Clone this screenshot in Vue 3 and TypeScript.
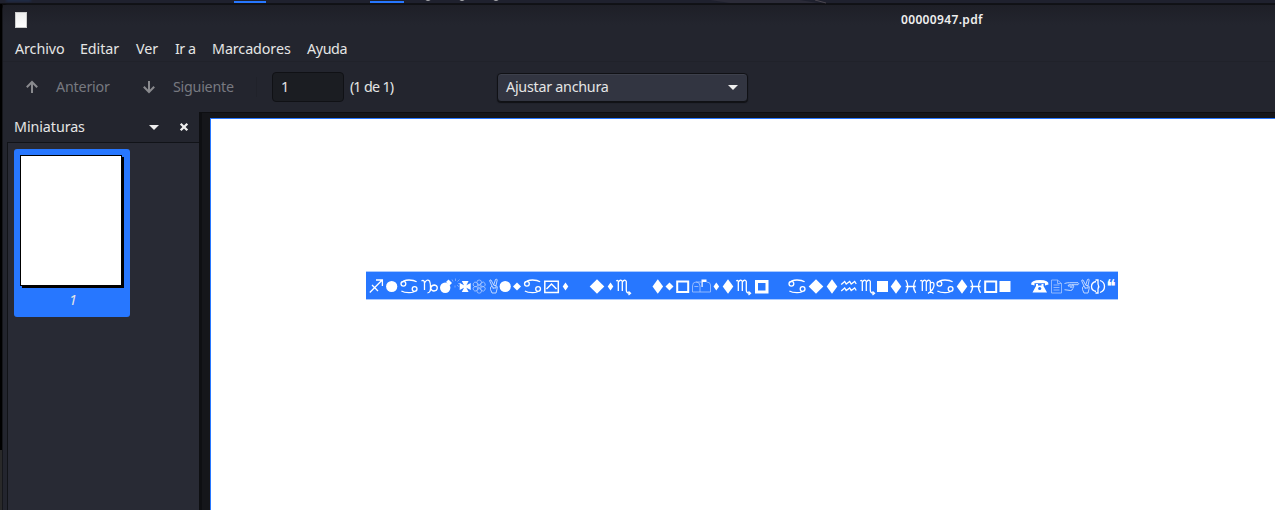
<script setup lang="ts">
const menus: string[] = ['Archivo', 'Editar', 'Ver', 'Ir a', 'Marcadores', 'Ayuda']
const menuWidths: number[] = [65, 56, 39, 37, 95, 60]

const shapes: Record<string, string> = {
  cancer: 'M1 11.5Q3 8 9 8Q14 8 16.6 9.8M5.8 11.8a2.4 2.4 0 1 1-4.8 0a2.4 2.4 0 1 1 4.8 0M17 17.2Q15 20.7 9 20.7Q4 20.7 1.4 19M17 17a2.4 2.4 0 1 1-4.8 0a2.4 2.4 0 1 1 4.8 0',
  sagittarius: 'M.8 20.5L13.2 8M7 8h6.4v6M3 13l6 6',
  capricorn: 'M.5 9Q3 7 3.5 11V18M3.5 11Q6 6.5 8.5 9Q9.5 11 9.5 15Q10 20.5 6.5 20.8M9.6 16Q10.5 13 13.5 13Q16.3 13.5 16.3 16Q16 19 13 19Q10.5 19 9.6 16',
  scorpio: 'M.3 9Q2 7.5 2.3 10V19M2.3 10Q5 6.5 6.3 9.5V19M6.3 10Q9 6.5 10.3 9.5V18Q10.3 21.3 14 21.3M12.5 19.6l2 1.7l-2 1.7',
  virgo: 'M.3 9Q2 7.5 2.3 10V19M2.3 10Q5 6.5 6.3 9.5V19M6.3 10Q9 6.5 10.3 9.5V17Q10.5 20 13.5 21.5M10.3 11Q14 9 14 13Q14 17.5 8 21.5',
  aquarius: 'M.5 12.5L4 9.5l1.5 2.5L9 9.5l1.5 2.5L14 9.5l1.5 2.5M.5 19L4 16l1.5 2.5L9 16l1.5 2.5L14 16l1.5 2.5',
  pisces: 'M1 8Q5.2 14.5 1 21M11 8Q6.8 14.5 11 21M1 14.5H11',
}
const signs: { n: string; x: number }[] = [
  { n: 'sagittarius', x: 369 }, { n: 'cancer', x: 400 }, { n: 'capricorn', x: 421 },
  { n: 'cancer', x: 523.5 }, { n: 'scorpio', x: 616 }, { n: 'scorpio', x: 736 },
  { n: 'cancer', x: 788 }, { n: 'aquarius', x: 840.7 }, { n: 'scorpio', x: 860 },
  { n: 'pisces', x: 904.7 }, { n: 'virgo', x: 920 }, { n: 'cancer', x: 936 }, { n: 'pisces', x: 969.5 },
]
const hands: number[] = [488.5, 1080.5]
const petals: number[] = [0, 60, 120, 180, 240, 300]
const arms: number[] = [0, 90, 180, 270]
const dots: number[] = [391.7, 505.2]
// centre x, half width, half height
const diamonds: number[][] = [
  [517, 4, 4], [565.5, 2.8, 4], [597, 7.3, 7.3], [610.5, 2.8, 4], [657.8, 5.3, 7.3],
  [669.5, 4, 4], [716.3, 2.8, 4], [728, 5.3, 7.3], [816, 7.3, 7.3], [832, 5.3, 7.3],
  [896, 5.3, 7.3], [962, 5.3, 7.3],
]
const diamond = (d: number[]): string => `M${d[0] - d[1]} 14.5L${d[0]} ${14.5 - d[2]}L${d[0] + d[1]} 14.5L${d[0]} ${14.5 + d[2]}Z`
</script>

<template>
  <div class="desktop">
    <div class="panel">
      <i class="glow"></i><i class="task t1"></i><i class="task t2"></i>
      <svg class="under" width="500" height="4" viewBox="0 0 500 4">
        <path d="M25 -1q3 2.200 6 0M59 -1q3 2.200 6 0M93 -1q3 2.200 6 0" fill="none" stroke="#ddd" stroke-width="1.200" />
        <path d="M310 0h90l18 3h-88z" fill="#2b2b38" /><path d="M415 0l11 3" stroke="#4b4650" />
      </svg>
    </div>
    <div class="body">
      <div class="edge"></div>
      <main class="window">
        <header class="title"><i class="doc"></i><b>00000947.pdf</b></header>
        <nav class="menu"><span v-for="(m, i) in menus" :key="m" :style="{ width: menuWidths[i] + 'px' }">{{ m }}</span></nav>
        <div class="tools">
          <svg class="arrow" width="14" height="14" viewBox="0 0 14 14"><path d="M7 13V2M1.8 7.2L7 2l5.2 5.2" /></svg>
          <span class="prev">Anterior</span>
          <svg class="arrow" width="14" height="14" viewBox="0 0 14 14"><path d="M7 1v11M1.8 6.8L7 12l5.2-5.2" /></svg>
          <span class="next">Siguiente</span>
          <span class="page">1</span><span class="count">(1 de 1)</span>
          <div class="select"><span>Ajustar anchura</span><svg width="10" height="5" viewBox="0 0 10 5"><path d="M0 0h10L5 5z" fill="#eee" /></svg></div>
        </div>
        <div class="content">
          <aside>
            <div class="side-head"><span>Miniaturas</span>
              <svg class="caret" width="10" height="5" viewBox="0 0 10 5"><path d="M0 0h10L5 5z" fill="#eee" /></svg>
              <svg width="10" height="10" viewBox="0 0 10 10"><path d="M1.7 1.7l6.6 6.6M8.3 1.7L1.7 8.3" stroke="#eee" stroke-width="2.3" /></svg>
            </div>
            <div class="thumbs"><div class="thumb"><div class="paper"></div><em>1</em></div></div>
          </aside>
          <section class="view"><div class="sheet">
            <div class="selection">
              <svg width="752" height="28" viewBox="366 0 752 28">
                <path v-for="(g, i) in signs" :key="i" :d="shapes[g.n]" :transform="`translate(${g.x} 0)`" class="sign" />
                <circle v-for="d in dots" :key="d" :cx="d" cy="14.5" r="5.6" />
                <path v-for="d in diamonds" :key="d[0]" :d="diamond(d)" />
                <circle cx="445.2" cy="15.7" r="5.2" /><path d="M446 10l2.5-2.5l3.5 3.5l-2.5 2.5z" />
                <path d="M453 9.500l-1-2M455.500 9V6.500M457.500 9.500l2-2M458 11.500h2.500M457 13l2 1.800M455 13.500v2" class="thin faint" />
                <path v-for="a in arms" :key="a" d="M461.800 9h6.800l-2.200 4.300v1.200h-2.400v-1.200z" :transform="`rotate(${a} 465.200 14.500)`" />
                <circle v-for="p in petals" :key="p" cx="479.2" cy="10.300" r="2.300" :transform="`rotate(${p} 479.2 14.600)`" class="thin" />
                <circle cx="479.2" cy="14.600" r="1.300" class="thin" />
                <path v-for="h in hands" :key="h" :transform="`translate(${h} 0)`" class="thin hand" d="M3.500 14L1.200 9Q1 7.500 2.500 8L5.200 13L7 7.500Q8.500 6.500 8.700 8L7.500 13.500Q9.500 14.500 8.500 17L7.500 21H3.500L2 17.500Q1.500 14.500 3.500 14zM3.500 14L5 16.500M5.200 13.500h2.300v2.500H4" />
                <path d="M544.8 9.200h13.500v11.300h-13.500zM546.500 17l5-5 5 5" class="line" />
                <path d="M677.2 9.500h11v10.500h-11z" class="box" />
                <path d="M756.500 9.500h10.500v10.500h-10.500z" class="thick" />
                <path d="M877 9h11v11h-11zM999.500 9h11v11h-11z" />
                <path d="M985.2 9.500h11v10.500h-11z" class="box" />
                <path d="M692.500 20v-6q0-4 3.500-4h5.500M692.500 20h7.500v-6q0-4-4-4M700 20h10.500v-7q0-3-4-3M694.300 14.500h4" class="thin" />
                <path d="M701.500 7.500h5v2.500h-3.800v5h-1.200z" />
                <path d="M1031 12.500q0-4.500 9-4.500t8.500 4.500l-3.500 1v-2.200h-10.500v2.200zM1036 12h2v1.500h3.500v-1.500h2v2l3.500 6.500h-14.500l3.500-6.500z" />
                <circle cx="1039.700" cy="16.500" r="1.600" fill="#2777ff" />
                <path d="M1051.500 8h6l4 3.500v9.500h-10zM1057.500 8v3.500h4M1053.500 13h6M1053.500 15.500h6M1053.500 18h6" class="thin" />
                <path d="M1064.500 11.500q3-1 5-.800h8.500q1.500 1 0 2h-6.500l2 .800q1 1-.500 1.700q1 1-.500 1.600q0 1.700-2 1.700l-6-.800M1071 12.700q-3-.500-3 1.300h4.500M1070 15.200h2.500" class="thin hand" />
                <path d="M1096 9.500q-4.500 1-4.500 5t4.500 5M1100 8.500q4.500 1.500 4.500 6t-4.500 6M1095.500 8h2.500v4q1.500 2.500 0 5v4h-2.500" class="sign" />
                <text x="1106.300" y="20.500" font-size="19" textLength="9.500" lengthAdjust="spacingAndGlyphs">❝</text>
              </svg>
            </div>
          </div></section>
        </div>
      </main>
    </div>
  </div>
</template>

<style>
body { margin: 0; background: #0b0b0d; }
</style>
<style scoped>
.desktop { width: 1275px; height: 510px; overflow: hidden; display: flex; flex-direction: column; font: 14.3px/20px "Noto Sans", sans-serif; color: #e5e5e5; white-space: nowrap; }
.panel { height: 3px; flex: none; background: #1f212e; position: relative; border-bottom: 1px solid #111217; }
.glow { position: absolute; left: 6px; width: 25px; height: 1px; background: #203b6c; filter: blur(1px); }
.task { position: absolute; top: 1px; width: 32px; height: 2px; background: #2777ff; }
.t1 { left: 234px; } .t2 { left: 370px; width: 34px; }
.under { position: absolute; left: 400px; top: 0; }
.body { display: flex; flex: 1; min-height: 0; }
.edge { width: 2px; background: linear-gradient(#000 446px, #292929 446px); }
.window { flex: 1; min-width: 0; display: flex; flex-direction: column; background: #23252e; border-left: 1px solid #15161b; border-top: 1px solid #101115; border-radius: 6px 0 0 0; }
.title { height: 31px; display: flex; background: linear-gradient(#1e1f27, #23252e 20px); }
.doc { width: 10px; height: 14px; margin: 7px 0 0 12px; border: 1px solid #ccc; background: linear-gradient(#eee, #fff); }
.title b { margin: 5px 0 0 874px; font-size: 12px; line-height: 20px; font-weight: 600; color: #eee; letter-spacing: .34px; }
.menu { height: 25px; padding-left: 12px; display: flex; line-height: 25px; border-bottom: 1px solid #20222a; letter-spacing: -.08px; }
.menu span:nth-child(4) { letter-spacing: -.5px; }
.menu span:nth-child(6) { letter-spacing: -.4px; }
.tools { height: 50px; display: flex; align-items: center; padding-left: 22px; box-sizing: border-box; }
.arrow { fill: none; stroke: #898a8e; stroke-width: 2; }
.prev { width: 70px; margin-left: 17px; color: #777980; margin-right: 16px; letter-spacing: -.2px; }
.next { width: 83px; margin-left: 17px; color: #777980; border-right: 1px solid #20222a; letter-spacing: -.25px; }
.page { width: 62px; height: 28px; line-height: 28px; margin-left: 15px; padding-left: 8px; background: #1b1d22; border: 1px solid #101115; border-radius: 4px; }
.count { width: 147px; margin-left: 6px; letter-spacing: -.95px; word-spacing: .7px; }
.select { width: 232px; height: 27px; padding: 0 9px 0 8px; box-sizing: content-box; margin-right: 0; border: 1px solid #101115; border-radius: 4px; background: #323541; display: flex; justify-content: space-between; align-items: center; box-shadow: 0 1px 1px #101115, inset 0 1px #3d404b; letter-spacing: -.25px; }
.content { flex: 1; min-height: 0; display: flex; }
aside { width: 196px; display: flex; flex-direction: column; }
.side-head { height: 30px; padding-left: 11px; display: flex; align-items: center; letter-spacing: -.08px; }
.side-head span { width: 135px; }
.caret { margin-right: 20px; }
.thumbs { flex: 1; margin-left: 4px; border: solid #111318; border-width: 1px 0 0 1px; background: #282a34; }
.thumb { width: 116px; height: 168px; margin: 6px 0 0 6px; border-radius: 3px; background: #2777ff; display: flex; flex-direction: column; align-items: center; }
.paper { width: 100px; height: 129px; margin: 6px 2px 0 0; background: #fff; border: 1px solid #000; box-shadow: 2px 2px #000; }
em { margin: 4px 0 0 2px; }
.view { flex: 1; border: solid #0e0f12; border-width: 1px 0 0 3px; background: #15161a; padding: 5px 0 0 8px; }
.sheet { height: 400px; border: solid #2777ff; border-width: 1px 0 0 1px; background: #fff; }
.selection { margin: 153px 0 0 155px; width: 752px; height: 27px; background: #2777ff; box-shadow: 0 0 0 1px #a9c9ff; clip-path: inset(-1px 0); }
.selection svg { display: block; fill: #fff; font-family: "DejaVu Sans", sans-serif; }
.selection svg .sign { fill: none; stroke: #fff; stroke-width: 1.3; }
.selection svg .line { fill: none; stroke: #fff; stroke-width: 1.5; }
.selection svg .thin { fill: none; stroke: #a9c8ff; stroke-width: .8; }
.selection svg .hand { stroke: #d0e1ff; stroke-width: .9; }
.selection svg .faint { stroke-width: .6; }
.selection svg .box { fill: none; stroke: #fff; stroke-width: 2; }
.selection svg .thick { fill: none; stroke: #fff; stroke-width: 3; }
</style>
